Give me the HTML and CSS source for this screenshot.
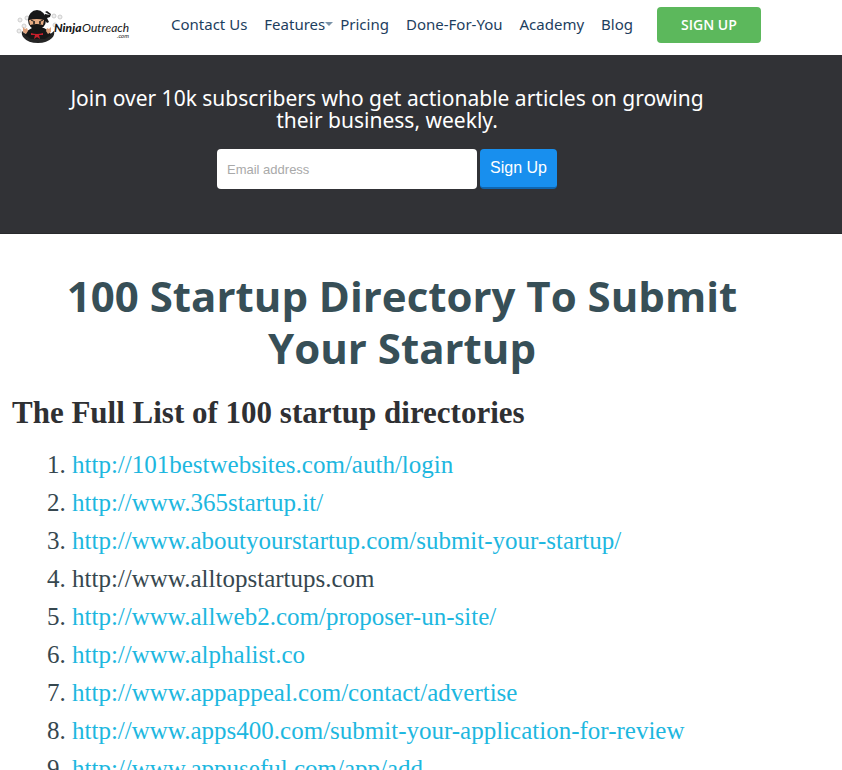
FILE: index.html
```html
<!DOCTYPE html>
<html lang="en">
<head>
<meta charset="utf-8">
<meta name="viewport" content="width=device-width, initial-scale=1">
<title>100 Startup Directory To Submit Your Startup</title>
<link rel="stylesheet" href="styles.css">
</head>
<body>
<header class="site-header">
  <a class="logo" href="#" aria-label="NinjaOutreach.com">
    <svg width="120" height="38" viewBox="0 0 120 38">
      <g fill="#eee" stroke="#cfcfcf" stroke-width="1">
        <circle cx="3" cy="25" r="2"/><circle cx="8" cy="20" r="2"/><circle cx="4" cy="14" r="2"/><circle cx="11" cy="12" r="2"/>
        <circle cx="38" cy="10" r="2"/><circle cx="44" cy="11" r="2"/><circle cx="39" cy="19" r="2"/>
      </g>
      <path d="M6 25Q10 30 22 30T38 25Q39 29 36 32Q31 37 22 37Q12 37 8 32Q5 29 6 25Z" fill="#252525"/>
      <path d="M28 10L29 8L34 9L29 6L31 5L35 8L34 11L31 12L33 16L31 17L28 13Z" fill="#171717"/>
      <path d="M16 22L11 25L9 29L15 33L29 33L35 29L33 25L28 22Z" fill="#171717"/>
      <path d="M7 21l2 2 2-1 1 3-2 3-3-2zM35 21l-2 2-2-1-1 3 2 3 3-2z" fill="#dda07a"/>
      <ellipse cx="21" cy="14" rx="9" ry="10" fill="#171717"/>
      <path d="M13 14Q21 12 28 14L27 19Q21 17 14 19Z" fill="#e8ad83"/>
      <path d="M15 14l4 2M27 14l-4 2" stroke="#171717" stroke-width="1"/>
      <circle cx="18" cy="17" r="1" fill="#171717"/><circle cx="24" cy="17" r="1" fill="#171717"/>
      <path d="M15 27Q21 29 27 27L27 29L23 29L24 33L21 31L18 33L19 29L15 29Z" fill="#c51f2b"/>
      <text x="38" y="26" class="logo-strong">Ninja</text>
      <text x="66" y="26" class="logo-light">Outreach</text>
      <text x="101" y="32" class="logo-suffix">.com</text>
    </svg>
  </a>
  <nav class="nav" aria-label="Main">
    <a href="#">Contact Us</a>
    <a class="has-menu" href="#">Features</a>
    <a href="#">Pricing</a>
    <a href="#">Done-For-You</a>
    <a href="#">Academy</a>
    <a href="#">Blog</a>
  </nav>
  <a class="header-cta" href="#">SIGN UP</a>
</header>
<section class="subscribe">
  <div class="subscribe-inner">
    <p class="pitch">Join over 10k subscribers who get actionable articles on growing their business, weekly.</p>
    <form class="subscribe-form">
      <input type="email" placeholder="Email address" aria-label="Email address">
      <button type="submit">Sign Up</button>
    </form>
  </div>
</section>
<main class="article">
  <h1>100 Startup Directory To Submit Your Startup</h1>
  <h2>The Full List of 100 startup directories</h2>
  <ol class="directories">
    <li><a href="#">http://101bestwebsites.com/auth/login</a></li>
    <li><a href="#">http://www.365startup.it/</a></li>
    <li><a href="#">http://www.aboutyourstartup.com/submit-your-startup/</a></li>
    <li>http://www.alltopstartups.com</li>
    <li><a href="#">http://www.allweb2.com/proposer-un-site/</a></li>
    <li><a href="#">http://www.alphalist.co</a></li>
    <li><a href="#">http://www.appappeal.com/contact/advertise</a></li>
    <li><a href="#">http://www.apps400.com/submit-your-application-for-review</a></li>
    <li><a href="#">http://www.appuseful.com/app/add</a></li>
  </ol>
</main>
</body>
</html>
```
FILE: styles.css
```css
* { box-sizing: border-box; }
body {
  margin: 0;
  background: #fff;
  color: #36474f;
  font-family: "Open Sans", sans-serif;
}
a { text-decoration: none; }

.site-header {
  display: flex;
  align-items: center;
  height: 55px;
  padding: 0 16px 6px;
}
.logo { display: flex; flex: none; width: 120px; margin-right: 35px; }
.logo text { font-family: Lato, sans-serif; font-style: italic; fill: #171717; }
.logo-strong { font-size: 12px; font-weight: 900; }
.logo-light { font-size: 12px; }
.logo-suffix { font-size: 6px; }

.nav { display: flex; gap: 17px; padding-bottom: 2px; white-space: nowrap; }
.nav a { color: #1d3e5e; font-family: "Noto Sans", sans-serif; font-size: 15px; line-height: 24px; }
.has-menu { display: flex; align-items: center; margin-right: -10px; }
.has-menu::after {
  content: "";
  border: 4px solid transparent;
  border-top-color: #7992a8;
  border-bottom: 0;
}
.header-cta {
  flex: none;
  width: 104px;
  margin-left: 24px;
  border-radius: 4px;
  background: #5cb85c;
  color: #fff;
  font-size: 14px;
  font-weight: 600;
  line-height: 36px;
  text-align: center;
}

.subscribe {
  padding: 32px 80px 44px 12px;
  border-bottom: 1px solid #28292c;
  background: #313236;
}
.subscribe-inner { display: flex; flex-direction: column; align-items: center; gap: 18px; }
.pitch {
  max-width: 660px;
  margin: 0;
  color: #fff;
  font-family: "Noto Sans", sans-serif;
  font-size: 21px;
  line-height: 22px;
  text-align: center;
}
.subscribe-form { display: flex; gap: 3px; }
.subscribe-form input,
.subscribe-form button { height: 40px; border: 0; border-radius: 4px; font-family: "Liberation Sans", sans-serif; }
.subscribe-form input { width: 260px; padding: 0 10px; background: #fff; font-size: 13px; }
.subscribe-form input::placeholder { color: #a9a9a9; }
.subscribe-form button {
  width: 77px;
  padding: 0;
  border-bottom: 2px solid #0f66b0;
  background: #188fee;
  color: #fff;
  font-size: 16px;
}

.article { padding: 36px 50px 0 12px; font-family: "Liberation Serif", serif; }
h1 {
  max-width: 700px;
  margin: 0 auto;
  color: #374f57;
  font-family: "Open Sans", sans-serif;
  font-size: 42px;
  font-weight: 700;
  line-height: 52px;
  text-align: center;
}
h2 { margin: 20px 0 14px; color: #2f3033; font-size: 31px; line-height: 38px; }
.directories { margin: 0; padding-left: 35px; list-style-position: inside; font-size: 25px; line-height: 38px; }
.directories a { color: #1db7e0; }
```
